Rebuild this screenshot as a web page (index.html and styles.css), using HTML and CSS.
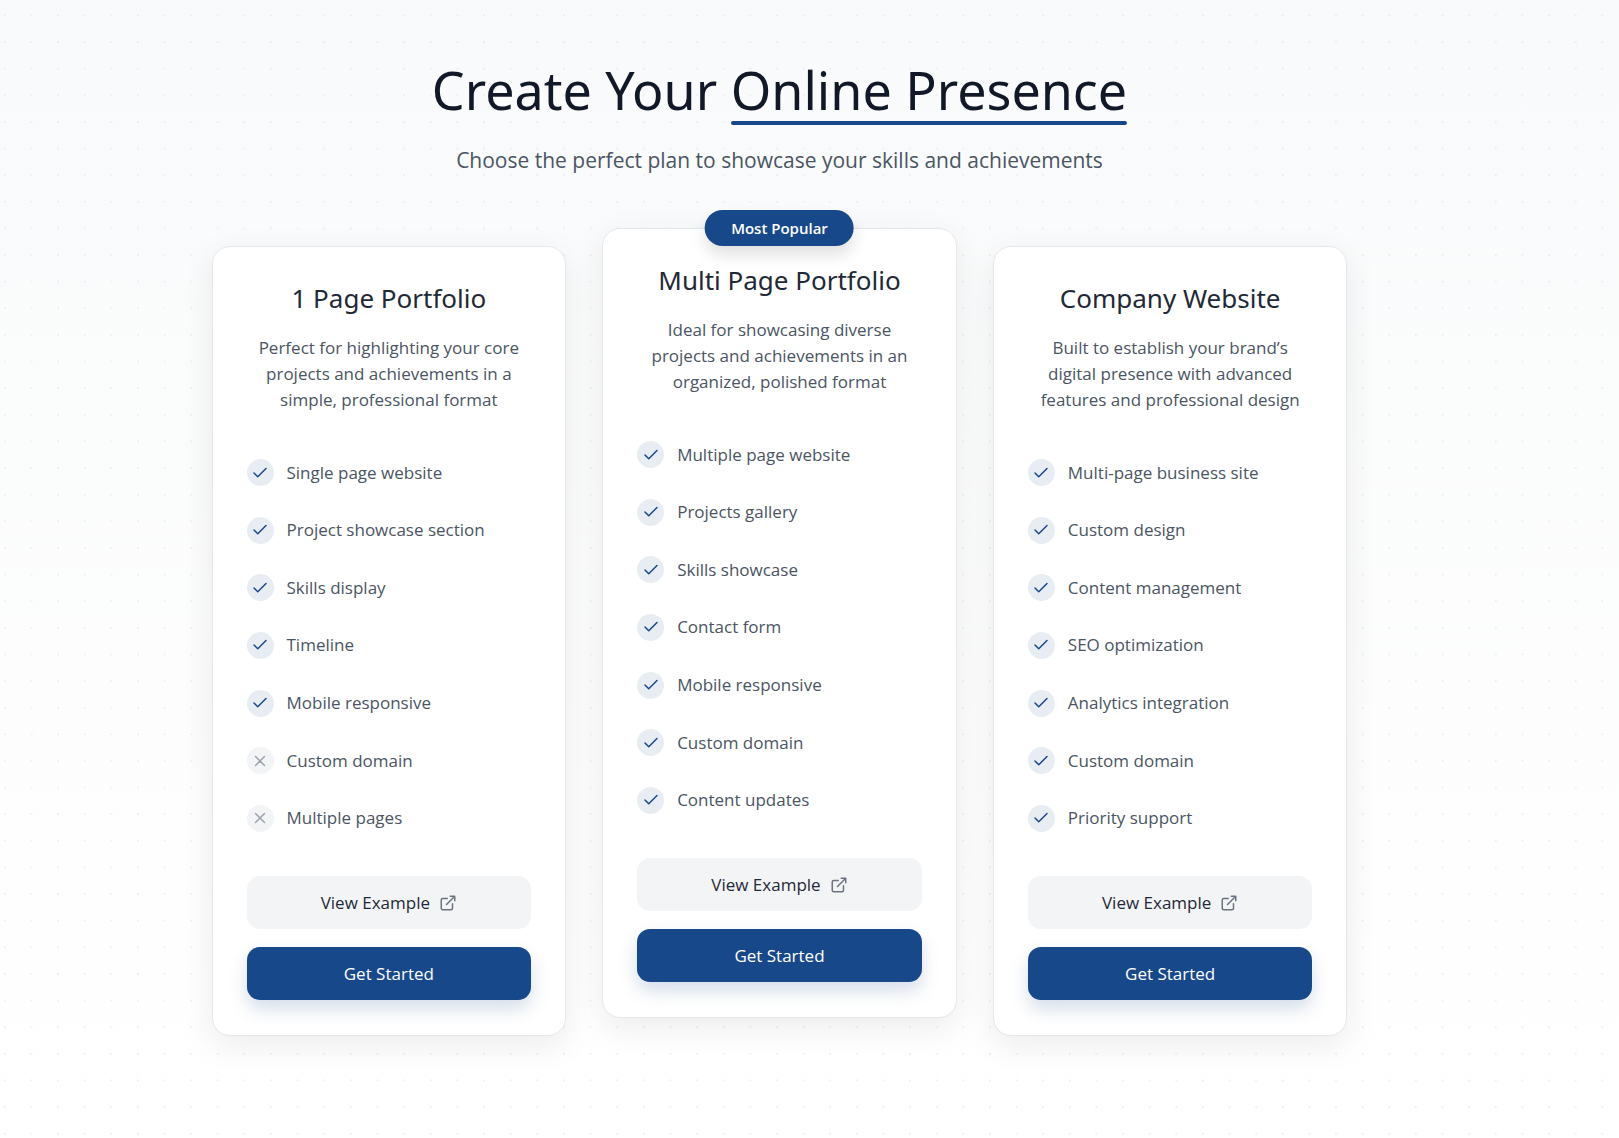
FILE: index.html
```html
<!DOCTYPE html>
<html lang="en">
<head>
<meta charset="utf-8">
<meta name="viewport" content="width=device-width, initial-scale=1">
<title>Create Your Online Presence</title>
<link rel="stylesheet" href="styles.css">
</head>
<body>
<svg class="sprite" aria-hidden="true">
  <symbol id="check" viewBox="0 0 24 24"><path d="M20 6 9 17l-5-5"/></symbol>
  <symbol id="cross" viewBox="0 0 24 24"><path d="M18 6 6 18M6 6l12 12"/></symbol>
  <symbol id="external" viewBox="0 0 24 24"><path d="M15 3h6v6M10 14 21 3M18 13v6a2 2 0 0 1-2 2H5a2 2 0 0 1-2-2V8a2 2 0 0 1 2-2h6"/></symbol>
</svg>
<svg class="dots" aria-hidden="true">
  <defs>
    <pattern id="grid" width="24" height="24" patternUnits="userSpaceOnUse" patternTransform="translate(-9 1.6) scale(1.1094)">
      <circle cx="12.4" cy="12.4" r="0.7" fill="#d9dce1"/>
    </pattern>
  </defs>
  <rect width="100%" height="100%" fill="url(#grid)"/>
</svg>
<main class="page">
  <header class="intro">
    <h1>Create Your <span class="underlined">Online Presence</span></h1>
    <p>Choose the perfect plan to showcase your skills and achievements</p>
  </header>
  <div class="plans">
    <article class="card">
      <h2>1 Page Portfolio</h2>
      <p class="summary">Perfect for highlighting your core projects and achievements in a simple, professional format</p>
      <ul class="features">
        <li><span class="mark"><svg><use href="#check"/></svg></span>Single page website</li>
        <li><span class="mark"><svg><use href="#check"/></svg></span>Project showcase section</li>
        <li><span class="mark"><svg><use href="#check"/></svg></span>Skills display</li>
        <li><span class="mark"><svg><use href="#check"/></svg></span>Timeline</li>
        <li><span class="mark"><svg><use href="#check"/></svg></span>Mobile responsive</li>
        <li><span class="mark off"><svg><use href="#cross"/></svg></span>Custom domain</li>
        <li><span class="mark off"><svg><use href="#cross"/></svg></span>Multiple pages</li>
      </ul>
      <div class="actions">
        <button class="button" type="button">View Example <svg><use href="#external"/></svg></button>
        <button class="button primary" type="button">Get Started</button>
      </div>
    </article>
    <article class="card popular">
      <span class="badge">Most Popular</span>
      <h2>Multi Page Portfolio</h2>
      <p class="summary">Ideal for showcasing diverse projects and achievements in an organized, polished format</p>
      <ul class="features">
        <li><span class="mark"><svg><use href="#check"/></svg></span>Multiple page website</li>
        <li><span class="mark"><svg><use href="#check"/></svg></span>Projects gallery</li>
        <li><span class="mark"><svg><use href="#check"/></svg></span>Skills showcase</li>
        <li><span class="mark"><svg><use href="#check"/></svg></span>Contact form</li>
        <li><span class="mark"><svg><use href="#check"/></svg></span>Mobile responsive</li>
        <li><span class="mark"><svg><use href="#check"/></svg></span>Custom domain</li>
        <li><span class="mark"><svg><use href="#check"/></svg></span>Content updates</li>
      </ul>
      <div class="actions">
        <button class="button" type="button">View Example <svg><use href="#external"/></svg></button>
        <button class="button primary" type="button">Get Started</button>
      </div>
    </article>
    <article class="card">
      <h2>Company Website</h2>
      <p class="summary">Built to establish your brand’s digital presence with advanced features and professional design</p>
      <ul class="features">
        <li><span class="mark"><svg><use href="#check"/></svg></span>Multi-page business site</li>
        <li><span class="mark"><svg><use href="#check"/></svg></span>Custom design</li>
        <li><span class="mark"><svg><use href="#check"/></svg></span>Content management</li>
        <li><span class="mark"><svg><use href="#check"/></svg></span>SEO optimization</li>
        <li><span class="mark"><svg><use href="#check"/></svg></span>Analytics integration</li>
        <li><span class="mark"><svg><use href="#check"/></svg></span>Custom domain</li>
        <li><span class="mark"><svg><use href="#check"/></svg></span>Priority support</li>
      </ul>
      <div class="actions">
        <button class="button" type="button">View Example <svg><use href="#external"/></svg></button>
        <button class="button primary" type="button">Get Started</button>
      </div>
    </article>
  </div>
</main>
</body>
</html>
```
FILE: styles.css
```css
* { box-sizing: border-box; margin: 0; padding: 0; }

body {
  position: relative;
  min-height: 100vh;
  font: 17px/26px "Open Sans", "Noto Sans", sans-serif;
  color: #4b5563;
  background: linear-gradient(#f9fafb, #fff);
}

.sprite { display: none; }

.dots { position: absolute; inset: 0; width: 100%; height: 100%; }

.page {
  position: relative;
  padding: 60px 84px 102px 24px;
}

.intro { text-align: center; }

h1 {
  font-size: 52px;
  line-height: 60px;
  font-weight: 400;
  color: #111827;
}

h1, h2 { font-family: "Noto Sans", "Open Sans", sans-serif; }

.underlined { position: relative; }

.underlined::after {
  content: "";
  position: absolute;
  left: 0;
  right: 0;
  bottom: 0;
  height: 4px;
  border-radius: 4px;
  background: #17498a;
}

.intro p { margin-top: 24px; font-size: 21px; line-height: 32px; }

.plans {
  display: grid;
  grid-template-columns: repeat(3, 1fr);
  gap: 36px;
  max-width: 1136px;
  margin: 70px auto 0;
}

.card {
  position: relative;
  padding: 34px 34px 35px;
  border: 1px solid #e5e7eb;
  border-radius: 18px;
  background: #fff;
  box-shadow: 0 9px 33px rgba(0, 0, 0, .08);
}

.popular { top: -18px; }

.badge {
  position: absolute;
  top: -19px;
  left: 50%;
  transform: translateX(-50%);
  padding: 0 26px;
  border-radius: 18px;
  font-size: 15px;
  line-height: 36px;
  font-weight: 600;
  white-space: nowrap;
  color: #fff;
  background: #17498a;
  box-shadow: 0 9px 16px rgba(0, 0, 0, .12);
}

h2 {
  font-size: 26px;
  line-height: 34px;
  font-weight: 400;
  text-align: center;
  color: #1f2937;
}

.summary { margin-top: 20px; text-align: center; }

.features {
  display: flex;
  flex-direction: column;
  justify-content: space-between;
  min-height: 373px;
  margin: 46px 0 44px;
  list-style: none;
}

.features li { display: flex; align-items: center; gap: 13px; }

.mark {
  display: grid;
  place-items: center;
  flex: none;
  width: 27px;
  height: 27px;
  border-radius: 50%;
  color: #17498a;
  background: #e8edf3;
}

.mark.off { color: #9ca3af; background: #f3f4f6; }

.mark svg, .button svg {
  width: 18px;
  height: 18px;
  fill: none;
  stroke: currentColor;
  stroke-width: 2;
  stroke-linecap: round;
  stroke-linejoin: round;
}

.actions { display: grid; gap: 18px; }

.button {
  display: flex;
  align-items: center;
  justify-content: center;
  gap: 9px;
  height: 53px;
  border: 0;
  border-radius: 13px;
  font: inherit;
  color: #1f2937;
  background: #f3f4f6;
  cursor: pointer;
}

.button svg { color: #6b7280; }

.primary {
  color: #fff;
  background: #17498a;
  box-shadow: 0 9px 18px rgba(23, 73, 138, .18);
}

@media (max-width: 1000px) {
  .page { padding-right: 24px; }
  .plans { grid-template-columns: 1fr; max-width: 400px; }
  .popular { top: 0; }
}
```
